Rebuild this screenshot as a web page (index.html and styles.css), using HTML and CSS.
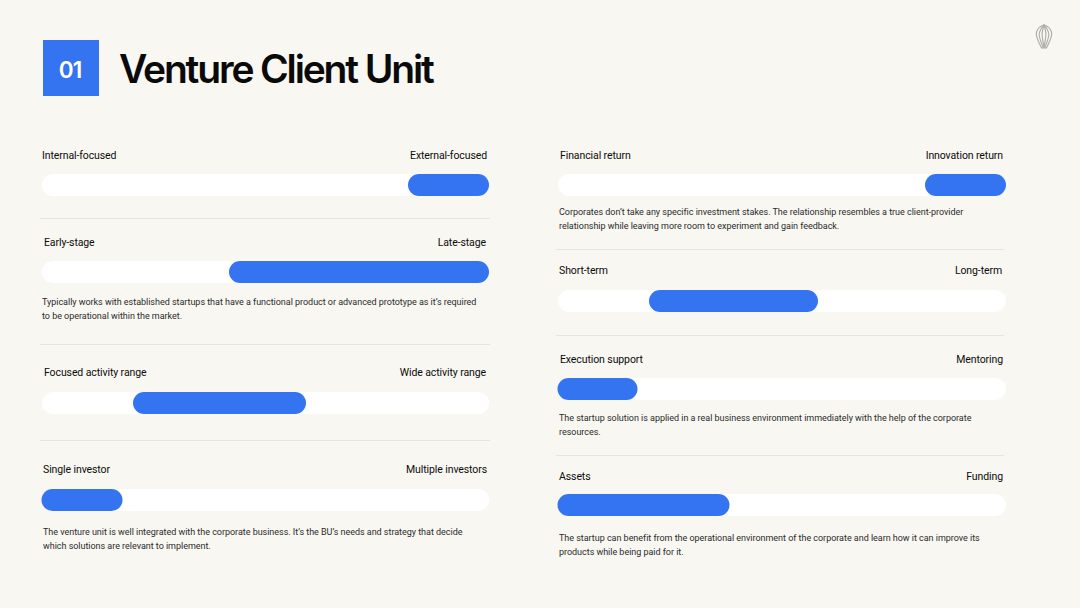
FILE: index.html
```html
<!DOCTYPE html>
<html lang="en">
<head>
<meta charset="utf-8">
<title>Venture Client Unit</title>
<link rel="stylesheet" href="styles.css">
</head>
<body>
<header class="header">
  <div class="badge">01</div>
  <h1 class="title">Venture Client Unit</h1>
  <svg class="logo" viewBox="0 0 20 26" fill="none" stroke="#aeaeaa" stroke-width="1.2">
    <path d="M10 1C5.500 2.500 2 6 2 10.500C2 15 5.500 21 7.500 25H12.500C14.500 21 18 15 18 10.500C18 6 14.500 2.500 10 1Z"/>
    <path d="M10 1C7.500 4 5 7.500 5 11C5 15.500 8 21 9.200 25"/>
    <path d="M10 1C12.500 4 15 7.500 15 11C15 15.500 12 21 10.800 25"/>
    <path d="M10 1C8.800 5 8 8 8 11C8 15 9.500 20 10 25C10.500 20 12 15 12 11C12 8 11.200 5 10 1Z"/>
  </svg>
</header>
<main class="columns">
  <div class="column column-left">
    <section class="row l1">
      <div class="labels"><span>Internal-focused</span><span>External-focused</span></div>
      <div class="track"><div class="fill" style="margin-left:81.9%;width:18.1%"></div></div>
    </section>
    <section class="row l2">
      <div class="labels"><span>Early-stage</span><span>Late-stage</span></div>
      <div class="track"><div class="fill" style="margin-left:41.8%;width:58.2%"></div></div>
      <p class="desc">Typically works with established startups that have a functional product or advanced prototype as it’s required to be operational within the market.</p>
    </section>
    <section class="row l3">
      <div class="labels"><span>Focused activity range</span><span>Wide activity range</span></div>
      <div class="track"><div class="fill" style="margin-left:20.3%;width:38.8%"></div></div>
    </section>
    <section class="row l4">
      <div class="labels"><span>Single investor</span><span>Multiple investors</span></div>
      <div class="track"><div class="fill fill-start" style="margin-left:0;width:18.1%"></div></div>
      <p class="desc">The venture unit is well integrated with the corporate business. It’s the BU’s needs and strategy that decide which solutions are relevant to implement.</p>
    </section>
  </div>
  <div class="column column-right">
    <section class="row r1">
      <div class="labels"><span>Financial return</span><span>Innovation return</span></div>
      <div class="track"><div class="fill" style="margin-left:81.9%;width:18.1%"></div></div>
      <p class="desc">Corporates don’t take any specific investment stakes. The relationship resembles a true client-provider relationship while leaving more room to experiment and gain feedback.</p>
    </section>
    <section class="row r2">
      <div class="labels"><span>Short-term</span><span>Long-term</span></div>
      <div class="track"><div class="fill" style="margin-left:20.3%;width:37.7%"></div></div>
    </section>
    <section class="row r3">
      <div class="labels"><span>Execution support</span><span>Mentoring</span></div>
      <div class="track"><div class="fill fill-start" style="margin-left:0;width:17.9%"></div></div>
      <p class="desc">The startup solution is applied in a real business environment immediately with the help of the corporate resources.</p>
    </section>
    <section class="row r4">
      <div class="labels"><span>Assets</span><span>Funding</span></div>
      <div class="track"><div class="fill fill-start" style="margin-left:0;width:38.4%"></div></div>
      <p class="desc">The startup can benefit from the operational environment of the corporate and learn how it can improve its products while being paid for it.</p>
    </section>
  </div>
</main>
</body>
</html>
```
FILE: styles.css
```css
* { box-sizing: border-box; }
html, body { margin: 0; height: 100%; }
body {
  width: 1080px;
  height: 608px;
  overflow: hidden;
  background: #f8f7f2;
  color: #0c0c0c;
  font-family: Roboto, "Liberation Sans", sans-serif;
}
.header {
  position: relative;
  display: flex;
  align-items: center;
  gap: 20px;
  height: 148px;
  padding: 40px 0 52px 43px;
}
.badge {
  width: 56px;
  height: 56px;
  padding: 2px 2px 0 0;
  display: flex;
  align-items: center;
  justify-content: center;
  background: #3574f0;
  color: #fff;
  font-family: Inter, sans-serif;
  font-size: 22.500px;
  font-weight: 600;
  letter-spacing: -1px;
}
.title {
  margin: 0;
  padding-top: 2px;
  font-family: Inter, sans-serif;
  font-size: 39px;
  line-height: 56px;
  font-weight: 600;
  letter-spacing: -2.15px;
  color: #0a0a0a;
}
.logo {
  position: absolute;
  left: 1034px;
  top: 24px;
  width: 20px;
  height: 25px;
}
.columns {
  display: grid;
  grid-template-columns: 450px 448px;
  column-gap: 66px;
  margin-left: 40px;
}
.row {
  padding-top: var(--pt, 0);
  padding-bottom: var(--pb, 0);
  border-bottom: 1px solid #e6e5e0;
}
.row:last-child { border-bottom: 0; }
.labels {
  display: flex;
  justify-content: space-between;
  height: 14px;
  padding: 0 var(--lr, 3px) 0 var(--ll, 3px);
  font-size: 10.500px;
  line-height: 15px;
  letter-spacing: -0.1px;
}
.track {
  height: 22px;
  margin: var(--gap, 12px) 1px 0 2px;
  border-radius: 11px;
  background: #fff;
}
.column-right .track { margin-left: 2px; margin-right: -2px; }
.fill {
  height: 22px;
  border-radius: 11px;
  background: #3574f0;
}
.fill-start { transform: translateX(-0.500px); }
.desc {
  margin: var(--dgap, 12px) 0 0;
  padding: 0 8px 0 var(--dl, 2px);
  font-size: 9px;
  line-height: 14px;
  letter-spacing: -0.03px;
  color: #2b2b2b;
}
.l1 { --pb: 22px; --ll: 2px; --lr: 3px; }
.l2 { --pt: 16px; --pb: 21px; --gap: 12px; --dgap: 12px; --dl: 2px; --ll: 4px; --lr: 4px; }
.l3 { --pt: 20px; --pb: 26px; --gap: 13px; --ll: 4px; --lr: 4px; }
.l4 { --pt: 21px; --gap: 13px; --dgap: 14px; --dl: 3px; --ll: 3px; --lr: 3px; }
.r1 { --pb: 16px; --gap: 12px; --dgap: 9px; --dl: 3px; --ll: 4px; --lr: 1px; }
.r2 { --pt: 13px; --pb: 23px; --gap: 13px; --ll: 3px; --lr: 2px; }
.r3 { --pt: 16px; --pb: 16px; --gap: 12px; --dgap: 11px; --dl: 3px; --ll: 4px; --lr: 1px; }
.r4 { --pt: 13px; --gap: 11px; --dgap: 15px; --dl: 3px; --ll: 3px; --lr: 1px; }
```
